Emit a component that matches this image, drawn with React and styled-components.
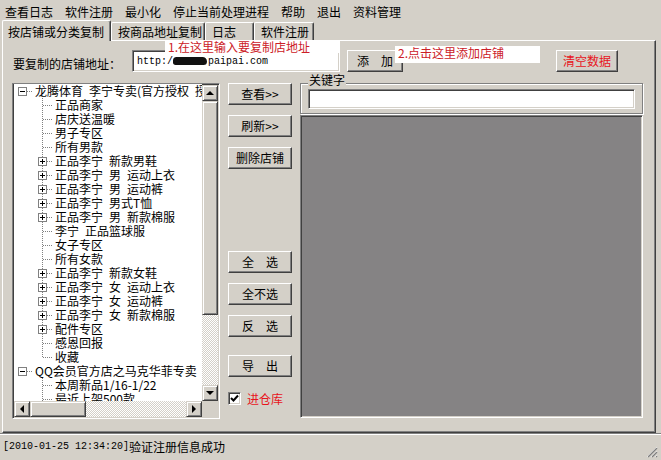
import React from "react";
import styled, { createGlobalStyle } from "styled-components";

const GlobalStyle = createGlobalStyle`
  html, body {
    margin: 0;
    padding: 0;
    background: #d4d0c8;
  }
  body {
    font-family: "Noto Sans CJK SC", "Noto Sans", sans-serif;
    font-size: 12px;
    color: #000;
  }
`;

const Window = styled.div`
  width: 661px;
  height: 460px;
  display: flex;
  flex-direction: column;
  background: #d4d0c8;
  overflow: hidden;
`;

const MenuBar = styled.div`
  box-sizing: border-box;
  height: 20px;
  padding: 3px 0 0 5px;
  display: flex;
  align-items: center;
  gap: 12px;
  line-height: 14px;
`;

const MenuItem = styled.span`
  white-space: nowrap;
`;

const TabStrip = styled.div`
  height: 20px;
  display: flex;
  align-items: flex-end;
  padding-left: 2px;
`;

const Tab = styled.div`
  box-sizing: border-box;
  width: ${(p) => p.$w}px;
  height: ${(p) => (p.$active ? 21 : 18)}px;
  margin-bottom: ${(p) => (p.$active ? -1 : 0)}px;
  padding: ${(p) => (p.$active ? "4px 0 0 5px" : "2px 0 0 6px")};
  border-top: 1px solid #fff;
  border-left: 1px solid #fff;
  border-right: 1px solid #404040;
  box-shadow: inset -1px 0 #808080;
  border-radius: 2px 2px 0 0;
  background: #d4d0c8;
  position: relative;
  z-index: ${(p) => (p.$active ? 1 : 0)};
  line-height: 14px;
  white-space: nowrap;
`;

const Panel = styled.div`
  box-sizing: border-box;
  position: relative;
  margin-left: 2px;
  width: 654px;
  height: 393px;
  padding: 9px 0 0 9px;
  border-top: 1px solid #fff;
  border-left: 1px solid #fff;
  border-right: 1px solid #404040;
  border-bottom: 1px solid #404040;
  box-shadow: inset -1px -1px #808080;
`;

// red hints pasted over the window
const Note = styled.div`
  position: absolute;
  left: ${(p) => p.$x}px;
  top: ${(p) => p.$y}px;
  width: ${(p) => p.$w}px;
  height: ${(p) => p.$h}px;
  box-sizing: border-box;
  padding-left: 3px;
  background: #fff;
  color: #cc2027;
  line-height: 13px;
  white-space: nowrap;
  z-index: 2;
`;

const TopRow = styled.div`
  display: flex;
  align-items: center;
  height: 22px;
`;

const FieldLabel = styled.span`
  width: 119px;
  padding-left: 1px;
  margin-top: 5px;
  line-height: 14px;
  white-space: nowrap;
`;

const Sunken = styled.div`
  box-sizing: border-box;
  border: 1px solid;
  border-color: #808080 #fff #fff #808080;
  box-shadow: inset 1px 1px #404040, inset -1px -1px #d4d0c8;
`;

const UrlInput = styled(Sunken)`
  width: 208px;
  height: 22px;
  background: #fff;
  display: flex;
  align-items: center;
  padding-left: 4px;
  font-family: "Liberation Mono", monospace;
  font-size: 10px;
  white-space: nowrap;
`;

const Scribble = styled.span`
  display: inline-block;
  width: 34px;
  height: 8px;
  margin: 0 1px 0 0;
  background: #111;
  border-radius: 4px 5px 4px 3px;
`;

const Button = styled.div`
  box-sizing: border-box;
  width: ${(p) => p.$w || 64}px;
  height: 22px;
  margin-left: ${(p) => p.$ml || 0}px;
  margin-top: ${(p) => p.$mt || 0}px;
  flex: none;
  display: flex;
  align-items: center;
  justify-content: center;
  border: 1px solid;
  border-color: #fff #404040 #404040 #fff;
  box-shadow: inset -1px -1px #808080;
  background: #d4d0c8;
  color: ${(p) => (p.$red ? "#e8141c" : "#000")};
  line-height: 14px;
  white-space: pre;
`;

const Main = styled.div`
  display: flex;
  align-items: flex-start;
  margin-top: 11px;
`;

const TreeBox = styled(Sunken)`
  width: 208px;
  height: 336px;
  padding: 1px;
  display: grid;
  grid-template-columns: 1fr 16px;
  grid-template-rows: 1fr 16px;
  background: #d4d0c8;
`;

const TreeList = styled.div`
  background: #fff;
  overflow: hidden;
  margin-top: -1px;
`;

const TreeRow = styled.div`
  height: 14px;
  display: flex;
  align-items: center;
  white-space: pre;
  line-height: 14px;
`;

const RowText = styled.span`
  padding-left: 1px;
`;

const VScroll = styled.div`
  display: flex;
  flex-direction: column;
`;

const HScroll = styled.div`
  display: flex;
`;

const ScrollButton = styled.div`
  box-sizing: border-box;
  width: 16px;
  height: 16px;
  flex: none;
  display: flex;
  align-items: center;
  justify-content: center;
  border: 1px solid;
  border-color: #d4d0c8 #404040 #404040 #d4d0c8;
  box-shadow: inset 1px 1px #fff, inset -1px -1px #808080;
  background: #d4d0c8;
`;

const Thumb = styled(ScrollButton)`
  width: ${(p) => (p.$horizontal ? `${p.$size}px` : "16px")};
  height: ${(p) => (p.$horizontal ? "16px" : `${p.$size}px`)};
`;

const Track = styled.div`
  flex: 1;
  background: repeating-conic-gradient(#fff 0 25%, #d4d0c8 0 50%) 0 0 / 2px 2px;
`;

const Corner = styled.div`
  background: #d4d0c8;
`;

const arrows = {
  up: "border-width: 0 4px 4px; border-color: transparent transparent #000;",
  down: "border-width: 4px 4px 0; border-color: #000 transparent transparent;",
  left: "border-width: 4px 4px 4px 0; border-color: transparent #000 transparent transparent;",
  right: "border-width: 4px 0 4px 4px; border-color: transparent transparent transparent #000;",
};

const Arrow = styled.span`
  width: 0;
  height: 0;
  border-style: solid;
  ${(p) => arrows[p.$dir]}
`;

const SideButtons = styled.div`
  display: flex;
  flex-direction: column;
  margin-left: 8px;
  width: 64px;
`;

const CheckRow = styled.div`
  display: flex;
  align-items: center;
  margin-top: 15px;
  height: 13px;
  gap: 6px;
`;

const CheckBox = styled(Sunken)`
  width: 13px;
  height: 13px;
  background: #fff;
  display: flex;
  align-items: center;
  justify-content: center;
`;

const CheckLabel = styled.span`
  color: #e8141c;
  line-height: 14px;
`;

const RightArea = styled.div`
  display: flex;
  flex-direction: column;
  margin-left: 8px;
  width: 343px;
`;

const GroupBox = styled.div`
  position: relative;
  box-sizing: border-box;
  height: 31px;
  padding: 5px 7px 0;
  border: 1px solid #808080;
  box-shadow: inset 1px 1px #fff, 1px 1px #fff;
`;

const Legend = styled.span`
  position: absolute;
  left: 7px;
  top: -11px;
  padding: 0 1px;
  background: #d4d0c8;
  line-height: 14px;
`;

const KeywordInput = styled(Sunken)`
  height: 20px;
  background: #fff;
`;

const ResultArea = styled(Sunken)`
  margin-top: 1px;
  height: 303px;
  background: #858384;
`;

const StatusBar = styled.div`
  flex: 1;
  display: flex;
  align-items: center;
  padding-left: 3px;
  border-top: 1px solid #808080;
  box-shadow: inset 0 1px #fff;
  line-height: 14px;
  white-space: nowrap;
`;

const Stamp = styled.span`
  font-family: "Liberation Mono", monospace;
  font-size: 10px;
`;

const Grip = styled.svg`
  margin-left: auto;
  align-self: flex-end;
  margin-right: 3px;
  margin-bottom: 2px;
`;

const menus = ["查看日志", "软件注册", "最小化", "停止当前处理进程", "帮助", "退出", "资料管理"];

const tabs = [
  { label: "按店铺或分类复制", w: 109, active: true },
  { label: "按商品地址复制", w: 94 },
  { label: "日志", w: 49 },
  { label: "软件注册", w: 60 },
];

const S = "\u2002";

const treeItems = [
  { text: `龙腾体育${S}李宁专卖(官方授权${S}授权店)`, level: 0, toggle: "minus" },
  { text: "正品商家", level: 1 },
  { text: "店庆送温暖", level: 1 },
  { text: "男子专区", level: 1 },
  { text: "所有男款", level: 1 },
  { text: `正品李宁${S}新款男鞋`, level: 1, toggle: "plus" },
  { text: `正品李宁${S}男${S}运动上衣`, level: 1, toggle: "plus" },
  { text: `正品李宁${S}男${S}运动裤`, level: 1, toggle: "plus" },
  { text: `正品李宁${S}男式T恤`, level: 1, toggle: "plus" },
  { text: `正品李宁${S}男${S}新款棉服`, level: 1, toggle: "plus" },
  { text: `李宁${S}正品篮球服`, level: 1 },
  { text: "女子专区", level: 1 },
  { text: "所有女款", level: 1 },
  { text: `正品李宁${S}新款女鞋`, level: 1, toggle: "plus" },
  { text: `正品李宁${S}女${S}运动上衣`, level: 1, toggle: "plus" },
  { text: `正品李宁${S}女${S}运动裤`, level: 1, toggle: "plus" },
  { text: `正品李宁${S}女${S}新款棉服`, level: 1, toggle: "plus" },
  { text: "配件专区", level: 1, toggle: "plus" },
  { text: "感恩回报", level: 1 },
  { text: "收藏", level: 1, last: true },
  { text: "QQ会员官方店之马克华菲专卖", level: 0, toggle: "minus" },
  { text: "本周新品1/16-1/22", level: 1 },
  { text: "最近上架500款", level: 1 },
];

// tree connector lines and the +/- box
const TreeGutter = ({ level, toggle, last }) => {
  const w = 20 + level * 20;
  const cx = 8 + level * 20;
  const dots = { stroke: "#808080", strokeDasharray: "1 1", shapeRendering: "crispEdges" };
  return (
    <svg width={w} height={14} style={{ flex: "none" }}>
      {level > 0 && (
        <line x1={cx + 0.5} y1={0} x2={cx + 0.5} y2={last ? 8 : 14} {...dots} />
      )}
      <line x1={cx + 1} y1={7.5} x2={w - 1} y2={7.5} {...dots} />
      {toggle && (
        <g shapeRendering="crispEdges">
          <rect x={cx - 3.5} y={3.5} width={8} height={8} fill="#fff" stroke="#808080" />
          <line x1={cx - 2} y1={7.5} x2={cx + 3} y2={7.5} stroke="#000" />
          {toggle === "plus" && (
            <line x1={cx + 0.5} y1={5} x2={cx + 0.5} y2={10} stroke="#000" />
          )}
        </g>
      )}
    </svg>
  );
};

const App = () => {
  return (
    <Window>
      <GlobalStyle />
      <MenuBar>
        {menus.map((m) => (
          <MenuItem key={m}>{m}</MenuItem>
        ))}
      </MenuBar>
      <TabStrip>
        {tabs.map((t) => (
          <Tab key={t.label} $w={t.w} $active={t.active}>
            {t.label}
          </Tab>
        ))}
      </TabStrip>
      <Panel>
        <Note $x={162} $y={-1} $w={175} $h={13}>
          1.在这里输入要复制店地址
        </Note>
        <Note $x={392} $y={5} $w={145} $h={17}>
          2.点击这里添加店铺
        </Note>
        <TopRow>
          <FieldLabel>要复制的店铺地址：</FieldLabel>
          <UrlInput>
            http:/
            <Scribble />
            paipai.com
          </UrlInput>
          <Button $w={56} $ml={7}>
            添　加
          </Button>
          <Button $w={62} $ml={153} $red>
            清空数据
          </Button>
        </TopRow>
        <Main>
          <TreeBox>
            <TreeList>
              {treeItems.map((item, i) => (
                <TreeRow key={i}>
                  <TreeGutter level={item.level} toggle={item.toggle} last={item.last} />
                  <RowText>{item.text}</RowText>
                </TreeRow>
              ))}
            </TreeList>
            <VScroll>
              <ScrollButton>
                <Arrow $dir="up" />
              </ScrollButton>
              <Thumb $size={214} />
              <Track />
              <ScrollButton>
                <Arrow $dir="down" />
              </ScrollButton>
            </VScroll>
            <HScroll>
              <ScrollButton>
                <Arrow $dir="left" />
              </ScrollButton>
              <Thumb $horizontal $size={56} />
              <Track />
              <ScrollButton>
                <Arrow $dir="right" />
              </ScrollButton>
            </HScroll>
            <Corner />
          </TreeBox>
          <SideButtons>
            <Button>查看&gt;&gt;</Button>
            <Button $mt={10}>刷新&gt;&gt;</Button>
            <Button $mt={10}>删除店铺</Button>
            <Button $mt={82}>全　选</Button>
            <Button $mt={10}>全不选</Button>
            <Button $mt={10}>反　选</Button>
            <Button $mt={18}>导　出</Button>
            <CheckRow>
              <CheckBox>
                <svg width="9" height="9" viewBox="0 0 9 9">
                  <path d="M1 4 L3.5 6.5 L8 1.5" fill="none" stroke="#000" strokeWidth="2" />
                </svg>
              </CheckBox>
              <CheckLabel>进仓库</CheckLabel>
            </CheckRow>
          </SideButtons>
          <RightArea>
            <GroupBox>
              <Legend>关键字</Legend>
              <KeywordInput />
            </GroupBox>
            <ResultArea />
          </RightArea>
        </Main>
      </Panel>
      <StatusBar>
        <Stamp>[2010-01-25 12:34:20]</Stamp>验证注册信息成功
        <Grip width="12" height="12" viewBox="0 0 12 12">
          <path d="M11 1 L1 11 M11 5 L5 11 M11 9 L9 11" stroke="#fff" strokeWidth="1" />
          <path d="M11 2 L2 11 M11 6 L6 11 M11 10 L10 11" stroke="#808080" strokeWidth="1.4" />
        </Grip>
      </StatusBar>
    </Window>
  );
};

export default App;
